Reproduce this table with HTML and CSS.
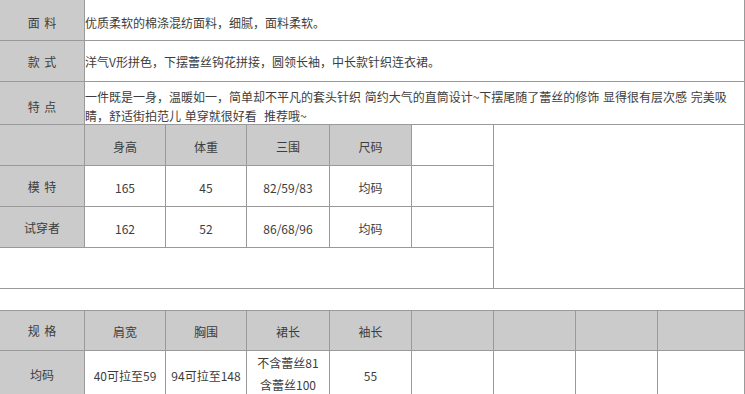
FILE: index.html
```html
<!DOCTYPE html>
<html lang="zh-CN">
<head>
<meta charset="utf-8">
<title>商品详情</title>
<link rel="stylesheet" href="styles.css">
</head>
<body>
<div class="sheet">
  <div class="label row-first">面 料</div>
  <div class="desc row-first">优质柔软的棉涤混纺面料，细腻，面料柔软。</div>

  <div class="label">款 式</div>
  <div class="desc">洋气V形拼色，下摆蕾丝钩花拼接，圆领长袖，中长款针织连衣裙。</div>

  <div class="label row-third">特 点</div>
  <div class="desc desc-multi row-third">一件既是一身，温暖如一，简单却不平凡的套头针织 简约大气的直筒设计~下摆尾随了蕾丝的修饰 显得很有层次感 完美吸<br>睛，舒适街拍范儿 单穿就很好看&nbsp;&nbsp;推荐哦~</div>

  <div class="side-blank"></div>

  <div class="label"></div>
  <div class="cell head">身高</div>
  <div class="cell head">体重</div>
  <div class="cell head">三围</div>
  <div class="cell head">尺码</div>
  <div class="cell"></div>

  <div class="label">模 特</div>
  <div class="cell">165</div>
  <div class="cell">45</div>
  <div class="cell">82/59/83</div>
  <div class="cell">均码</div>
  <div class="cell"></div>

  <div class="label">试穿者</div>
  <div class="cell">162</div>
  <div class="cell">52</div>
  <div class="cell">86/68/96</div>
  <div class="cell">均码</div>
  <div class="cell"></div>

  <div class="wide-blank"></div>
  <div class="full-blank"></div>

  <div class="label">规 格</div>
  <div class="cell head">肩宽</div>
  <div class="cell head">胸围</div>
  <div class="cell head">裙长</div>
  <div class="cell head">袖长</div>
  <div class="cell head"></div>
  <div class="cell head"></div>
  <div class="cell head"></div>
  <div class="cell head"></div>

  <div class="label">均码</div>
  <div class="cell">40可拉至59</div>
  <div class="cell">94可拉至148</div>
  <div class="cell cell-multi">不含蕾丝81<br>含蕾丝100</div>
  <div class="cell">55</div>
  <div class="cell"></div>
  <div class="cell"></div>
  <div class="cell"></div>
  <div class="cell"></div>
</div>
</body>
</html>
```

FILE: styles.css
```css
html, body {
  margin: 0;
  padding: 0;
  background: #ffffff;
}

body {
  font-family: "Noto Sans CJK SC", "Noto Sans", sans-serif;
  font-size: 12px;
  color: #3d3d3d;
}

.sheet {
  width: 744px;
  padding-right: 1px;
  background: #9a9a9a;
  display: grid;
  grid-template-columns: 84px 80px 80px 82px 81px 81px 81px 81px 86px;
  grid-template-rows: 40px 40px 42px 40px 40px 40px 40px 21px 39px 46px;
  gap: 1px;
}

.label {
  background: #cbcbcb;
  display: flex;
  align-items: center;
  justify-content: center;
  line-height: 19px;
  word-spacing: 2px;
}

.desc {
  grid-column: 2 / span 8;
  background: #ffffff;
  display: flex;
  align-items: center;
  padding-left: 0;
  line-height: 19px;
}

.desc-multi {
  display: block;
  padding-top: 5px;
  box-sizing: border-box;
  word-spacing: 1px;
}

.row-first {
  padding-top: 4px;
}

.label.row-third {
  padding-top: 6px;
}

.cell {
  background: #ffffff;
  display: flex;
  align-items: center;
  justify-content: center;
  padding-top: 2px;
  box-sizing: border-box;
}

.cell.head {
  background: #cbcbcb;
}

.cell-multi {
  text-align: center;
  line-height: 22px;
  padding-top: 0;
}

.side-blank {
  grid-column: 7 / span 3;
  grid-row: 4 / span 4;
  background: #ffffff;
}

.wide-blank {
  grid-column: 1 / span 6;
  background: #ffffff;
}

.full-blank {
  grid-column: 1 / span 9;
  background: #ffffff;
}
```
